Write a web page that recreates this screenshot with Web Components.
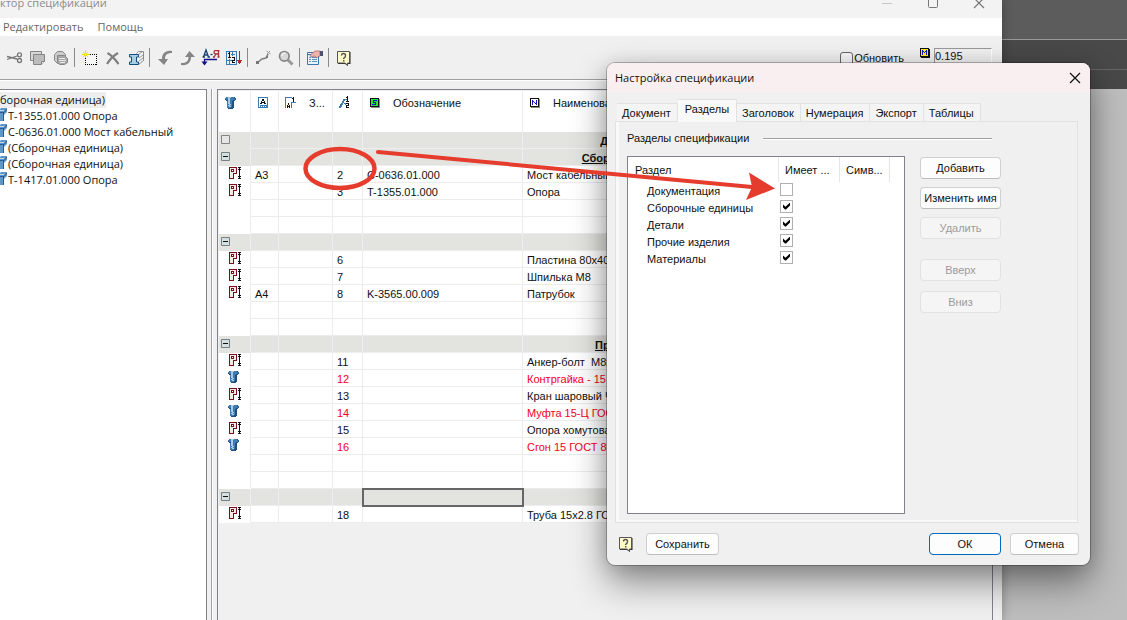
<!DOCTYPE html>
<html lang="ru">
<head>
<meta charset="utf-8">
<title>Редактор спецификации</title>
<style>
  html, body { height: 100%; }
  body {
    margin: 0;
    overflow: hidden;
    font: 11px/16px "Liberation Sans", Arial, sans-serif;
    color: #111;
    --ui-font: "Open Sans", "Noto Sans", sans-serif;
    --face: #f0f0f0;
    --edge: #82828c;
  }
</style>
</head>
<body>
<spec-desktop></spec-desktop>

<script>
const PALETTE = {
  k: '#111', W: '#fff', g: '#8c8c8c', G: '#22e83c', b: '#1414d2', Y: '#fff21c',
  R: '#7b0e18', p: '#f4e9ea', D: '#1d4f81', B: '#3f7ab0', L: '#a9cbe4', F: '#e8f1f8', r: '#b02727'
};

// small bitmap icons: one letter of PALETTE per pixel, dot is transparent
function pixmap(x, y, rows) {
  let out = '';
  rows.forEach((row, j) => {
    for (const m of row.matchAll(/([^.])\1*/g)) {
      out += `<rect x="${x + m.index}" y="${y + j}" width="${m[0].length}" height="1" fill="${PALETTE[m[1]]}"/>`;
    }
  });
  return `<g shape-rendering="crispEdges">${out}</g>`;
}

const ICONS = {
  cut: `<g fill="none" stroke="#777" stroke-width="1.3"><path d="M0 6.500L10 9M0 9.500L10 6"/><circle cx="12.500" cy="4.800" r="2"/><circle cx="12.500" cy="10.500" r="2"/></g>`,
  copy: `<path d="M.500 1.500h11v9H.500z" fill="#d6d6d6" stroke="#858585"/><path d="M3.500 4.500h11v7l-3 3h-8z" fill="#bcbcbc" stroke="#858585"/><path d="M14.500 11.500h-3v3" fill="#eee" stroke="#858585"/>`,
  paste: `<path d="M1.500 4.500l3-3h5l3 3v6l-3 3h-5l-3-3z" fill="#ccc" stroke="#888"/><path d="M4.500 5.500h7l3 3v4l-3 2h-5l-2-2z" fill="#a8a8a8" stroke="#858585"/><path d="M6 8.500h6M6 10.500h7M7 12.500h5" stroke="#e8e8e8"/>`,
  fresh: `<rect x="3.500" y="4.500" width="11" height="10" fill="#f6f6f6" stroke="#000" stroke-dasharray="1 1" shape-rendering="crispEdges"/><path d="M1 2l5 5M6 2L1 7M3.500 0v8M0 4.500h8" stroke="#e9df1c"/><path d="M3 4h1v1H3z" fill="#fff"/>`,
  del: `<path d="M2.500 3C6 5 10 9 13.500 14M13 3C8 6 5 9 2 14" fill="none" stroke="#808080" stroke-width="2.200"/>`,
  part: `<path d="M8.500 3.500l2-2h5v9l-5 4" fill="#f2f2f2" stroke="#8a8a8a"/><path d="M10.500 4.500l4-3M11 8l4-3M11 11l4-3" fill="none" stroke="#9a9a9a"/><path d="M1.500 4.500h9v2.500H8.500v5h2v2.500h-9V12h2V7h-2z" fill="#a7cdea" stroke="#174a7c"/>`,
  undo: `<path d="M15 1C8 0 5 4 5 9H1l6 6 4-6H8c0-4 2-6 7-6z" fill="#858585"/>`,
  redo: `<path d="M1 15c7 1 10-3 10-8h4L9.500 1 5 7h3.500c0 4-2 6-7.500 6z" fill="#858585"/>`,
  sortAz: `<g fill="none" stroke-width="1.300"><path d="M.500 7L3 0l2.500 7M1.500 5h3M-.500 7h2.500M4.500 7h2.500" stroke="#163f78"/><path d="M7.500 4.500h2" stroke="#163f78"/><path d="M11 7l2-3M15.500 0v7M16.500 .700h-4c-2 0-2 3.300 0 3.300h3M10 7h2M14.500 7h2" stroke="#a83131"/><path d="M1.500 14V9.500H14" stroke="#10108c"/></g><path d="M-1.500 11.500h6l-3 4z" fill="#10108c"/>`,
  sortNum: pixmap(0, 1, [
    'BBBBBBBBBBB..r..',
    'BFFkFFBFFFB..r..',
    'BFkkFFBFFFB..r..',
    'BFFkFBBBBFB..r..',
    'BFFkFFBFFFB..r..',
    'BFFkFFFFFFB..r..',
    'BFkkkFkkkFB..r..',
    'BFFFFFFFkFB..r..',
    'BFFBFFFFkFB..r..',
    'BBBBBBkkkFBrrrrr',
    'BFFBFFkFFFB.rrr.',
    'BFFBFFkkkFB.rrr.',
    'BFFBFFFFFFB..r..',
    'BBBBBBBBBBB.....']),
  link: `<path d="M2 13l5-4 4-1 2-4" fill="none" stroke="#808080" stroke-width="1.600"/><path d="M1 11h3v3H1zM11 6h2v2h-2z" fill="#777"/><path d="M11.500 1l4 3M15 1l-3 3" stroke="#999"/>`,
  lens: `<path d="M9.500 9.500l5 5" stroke="#999" stroke-width="3"/><circle cx="6.300" cy="6.300" r="4.800" fill="#d8d8d8" stroke="#858585" stroke-width="1.700"/><path d="M4 6c0-2 1-3 3-3" fill="none" stroke="#fff"/>`,
  props: `<path d="M.500 2.500h11v12H.500z" fill="#e8f3fc" stroke="#3f75a9"/><path d="M1 4.500h10" stroke="#3f75a9"/><path d="M2 7.500h2M5 7.500h5M2 9.500h2M5 9.500h5M2 11.500h2M5 11.500h5" stroke="#5f91bd"/><path d="M3 5l5-4 5 0v5l-4 2-1-2-4 1z" fill="#eeb2ac" stroke="#a85c5c" stroke-width=".7"/><path d="M13 1h3v5h-3z" fill="#4f4f70"/>`,
  help: `<path d="M13 2h1.500v12H12v2l-3-2H2v-1h11z" fill="#222"/><path d="M1.500 1.500h12v11.500H11.500v2L9 13H1.500z" fill="#fffcc7" stroke="#555"/><path d="M5.500 5.500c0-2.700 4-2.700 4 0S7.500 7.500 7.500 9" fill="none" stroke="#555" stroke-width="1.400"/><path d="M7 10h1.500v1.500H7z" fill="#555"/>`,
  bolt: pixmap(2, 2, [
    '.BBLLLBBBD.',
    'BBBLLBBBBBD',
    'DBBLLBBBBBD',
    '.DDLLBBBDD.',
    '..BLLBBDD..',
    '..BLLBBDD..',
    '..BLLBBDD..',
    '..BBLLBDD..',
    '..BLLBBDD..',
    '..BBLLBDD..',
    '..BBBBDDD..',
    '...DDDDD...']),
  detail: pixmap(3, 2, [
    'RRRRRRRR.kkk',
    'RppppppR..k.',
    'RpRRRppR.kkk',
    'RpRWRppR..k.',
    'RpRRRppR..k.',
    'RppppppR..k.',
    'RpppRRRR..k.',
    'RpppR.....k.',
    'RpppR.....k.',
    'RpppR....kkk',
    'RpppR.....k.',
    'RRRRR....kkk']),
  format: pixmap(3, 2, [
    'BBBBBBBBBB',
    'BWWWWWWWWB',
    'BWWWkkWWWB',
    'BWWWkkWWWB',
    'BWWkWWkWWB',
    'BWWkkkkWWB',
    'BWkkWWkkWB',
    'BWWWWWWWWB',
    'BWBBBBBBBB',
    'BWBWBWBWBB',
    'BBBBBBBBBB']),
  zone: pixmap(2, 2, [
    'BBBBBBB.k..',
    'BWWWWW.kk..',
    'BWWWWWW.k..',
    'BWWWWWW.k..',
    'BWWWWWWWk..',
    'BWWWWWBBBBB',
    'BWWkWWBWWW.',
    'BWWkWWBWWW.',
    'BWkWkWBWWW.',
    'BWkkkWBWWW.',
    'BWkWkWBWWW.']),
  position: pixmap(2, 1, [
    '........k..',
    '.......kk..',
    '........k..',
    '....BBBBk..',
    '....BB..k..',
    '...BB..kkk.',
    '...BB......',
    '..BB.BBkkk.',
    '.BBB..B..k.',
    '.BB....kkk.',
    'BBB....k...',
    'BB.....kkk.']),
  code: pixmap(3, 3, [
    'kkkkkkkkk.',
    'kGGGGGGGkg',
    'kGGbbbbGkg',
    'kGGbGGGGkg',
    'kGGbbbGGkg',
    'kGGGGbGGkg',
    'kGbbbbGGkg',
    'kGGGGGGGkg',
    'kkkkkkkkkg',
    '.ggggggggg']),
  name: pixmap(3, 3, [
    'kkkkkkkkk.',
    'kWWWWWWWkg',
    'kWbWWWbWkg',
    'kWbbWWbWkg',
    'kWbWbWbWkg',
    'kWbWWbbWkg',
    'kWbWWWbWkg',
    'kWWWWWWWkg',
    'kkkkkkkkkg',
    '.ggggggggg']),
  mass: pixmap(3, 3, [
    'kkkkkkkkk.',
    'kYYYYYYYkk',
    'kYbYYYbYkk',
    'kYbbYbbYkk',
    'kYbYbYbYkk',
    'kYbYYYbYkk',
    'kYbYYYbYkk',
    'kYYYYYYYkk',
    'kkkkkkkkkk',
    '.kkkkkkkkk']),
  minus: `<path d="M2.500 4.500h8v8h-8z" fill="#d2e0e2" stroke="#777f80"/><path d="M4 8.500h5" stroke="#111"/>`,
  empty: `<path d="M2.500 4.500h8v8h-8z" fill="#e6e6e3" stroke="#858585"/>`,
  min: `<path d="M3 8.500h10" stroke="currentColor" opacity=".35"/>`,
  max: `<rect x="3.500" y="3.500" width="9" height="9" rx="1" fill="none" stroke="currentColor"/>`,
  close: `<path d="M3 3l10 10M13 3L3 13" stroke="currentColor" stroke-width="1.200"/>`
};

class UiIcon extends HTMLElement {
  constructor() {
    super();
    this.attachShadow({ mode: 'open' });
  }

  connectedCallback() {
    const name = this.getAttribute('name');
    this.shadowRoot.innerHTML = `
      <style>
        :host { display: inline-block; flex: none; width: 16px; height: 16px; vertical-align: top; }
        svg { display: block; overflow: visible; }
      </style>
      <svg width="16" height="16" viewBox="0 0 16 16" aria-hidden="true">${ICONS[name] || ''}</svg>
    `;
  }
}
customElements.define('ui-icon', UiIcon);

class PushButton extends HTMLElement {
  constructor() {
    super();
    this.attachShadow({ mode: 'open' });
  }

  connectedCallback() {
    const disabled = this.hasAttribute('disabled') ? 'disabled' : '';
    this.shadowRoot.innerHTML = `
      <style>
        :host { display: block; }
        button {
          display: block;
          box-sizing: border-box;
          width: 100%;
          height: 22px;
          padding: 0 2px;
          border: 1px solid #d0d0d0;
          border-bottom-color: #bcbcbc;
          border-radius: 4px;
          background: #fdfdfd;
          font: inherit;
          color: inherit;
          white-space: nowrap;
        }
        button:disabled { color: #9c9c9c; background: #f5f5f5; border-color: #e2e2e2; }
        :host([primary]) button { border-color: #0067c0; }
      </style>
      <button type="button" ${disabled}><slot></slot></button>
    `;
  }
}
customElements.define('push-button', PushButton);

class ToolBar extends HTMLElement {
  constructor() {
    super();
    this.attachShadow({ mode: 'open' });
  }

  connectedCallback() {
    const items = [
      ['cut', 'Вырезать'], ['copy', 'Копировать'], ['paste', 'Вставить'], null,
      ['fresh', 'Добавить'], ['del', 'Удалить'], ['part', 'Деталь'], null,
      ['undo', 'Отменить'], ['redo', 'Повторить'], ['sortAz', 'Сортировать'], ['sortNum', 'Нумеровать'], null,
      ['link', 'Связь'], ['lens', 'Найти'], null,
      ['props', 'Свойства'], null,
      ['help', 'Справка']
    ];
    this.shadowRoot.innerHTML = `
      <style>
        :host {
          display: flex;
          height: 43px;
          padding-left: 3px;
          border-bottom: 1px solid #a0a0a0;
          box-shadow: 0 1px #fff;
        }
        .tools { display: flex; align-items: center; }
        .tools button { width: 23px; height: 22px; padding: 0 3px; border: 0; background: none; }
        i { width: 1px; height: 19px; margin: 0 3px 0 2px; background: #8a8a8a; }
        .extra { display: flex; align-items: flex-start; margin-left: auto; padding: 12px 10px 0 0; }
        label { display: flex; align-items: center; gap: 1px; margin-top: 2px; }
        input[type=checkbox] {
          appearance: none;
          box-sizing: border-box;
          width: 13px;
          height: 13px;
          margin: 0;
          border: 1px solid #666;
          border-radius: 3px;
          background: #f7f7f7;
        }
        .extra ui-icon { margin: -3px 1px 0 13px; }
        input[type=text] {
          box-sizing: border-box;
          width: 58px;
          height: 20px;
          padding: 0 0 4px;
          border: 1px solid #fff;
          border-top-color: #999;
          border-left-color: #999;
          background: transparent;
          font: inherit;
          color: inherit;
        }
      </style>
      <div class="tools">
        ${items.map(it => it
          ? `<button type="button" aria-label="${it[1]}"><ui-icon name="${it[0]}"></ui-icon></button>`
          : '<i></i>').join('')}
      </div>
      <div class="extra">
        <label><input type="checkbox">Обновить</label>
        <ui-icon name="mass"></ui-icon>
        <input type="text" value="0.195" aria-label="Масса">
      </div>
    `;
  }
}
customElements.define('tool-bar', ToolBar);

class SpecTree extends HTMLElement {
  constructor() {
    super();
    this.attachShadow({ mode: 'open' });
  }

  connectedCallback() {
    const nodes = [
      'T-1355.01.000 Опора',
      'С-0636.01.000 Мост кабельный',
      '(Сборочная единица)',
      '(Сборочная единица)',
      'T-1417.01.000 Опора'
    ];
    this.shadowRoot.innerHTML = `
      <style>
        :host {
          display: block;
          box-sizing: border-box;
          padding-top: 2px;
          border: 1px solid var(--edge);
          border-width: 1px 1px 0 0;
          background: #fff;
          overflow: hidden;
          font: 11px/16px var(--ui-font);
          white-space: nowrap;
        }
        ul { list-style: none; margin: 0; padding: 0; }
        li { display: flex; gap: 1px; height: 16px; }
        .root span { background: #eee; padding-right: 1px; }
        svg { display: block; flex: none; }
      </style>
      <ul>
        <li class="root"><span>борочная единица)</span></li>
        ${nodes.map(n => `
          <li>
            <svg width="7" height="16" viewBox="0 0 7 16" aria-hidden="true">
              <path d="M0 1l1-1h6v4L4 7v6H0z" fill="#5f97c8"/>
              <path d="M0 4.500h4M3.500 5v8M4 4.500L7 1" fill="none" stroke="#28598b"/>
              <path d="M0 2.500h4" stroke="#b7d5ee"/>
            </svg>
            <span>${n}</span>
          </li>`).join('')}
      </ul>
    `;
  }
}
customElements.define('spec-tree', SpecTree);

class SpecTable extends HTMLElement {
  constructor() {
    super();
    this.attachShadow({ mode: 'open' });
  }

  row(r) {
    if (r.group !== undefined) {
      return `<tr class="group">
        <td><ui-icon name="${r.icon || 'minus'}"></ui-icon></td><td></td><td></td><td></td>
        <td class="${r.active ? 'active' : ''}"></td><td>${r.group}</td><td></td>
      </tr>`;
    }
    const [icon, format, pos, code, name] = r;
    return `<tr class="${icon === 'bolt' ? 'std' : ''}">
      <td>${icon ? `<ui-icon name="${icon}"></ui-icon>` : ''}</td>
      <td>${format || ''}</td><td></td><td>${pos || ''}</td>
      <td>${code || ''}</td><td>${name || ''}</td><td></td>
    </tr>`;
  }

  connectedCallback() {
    const blank = [''];
    const rows = [
      { group: 'Документация', icon: 'empty' },
      { group: 'Сборочные единицы' },
      ['detail', 'А3', '2', 'С-0636.01.000', 'Мост кабельный'],
      ['detail', '', '3', 'T-1355.01.000', 'Опора'],
      blank, blank,
      { group: '' },
      ['detail', '', '6', '', 'Пластина 80х40'],
      ['detail', '', '7', '', 'Шпилька М8'],
      ['detail', 'А4', '8', 'K-3565.00.009', 'Патрубок'],
      blank, blank,
      { group: 'Прочие изделия' },
      ['detail', '', '11', '', 'Анкер-болт&nbsp; М8х'],
      ['bolt', '', '12', '', 'Контргайка - 15'],
      ['detail', '', '13', '', 'Кран шаровый Ч'],
      ['bolt', '', '14', '', 'Муфта 15-Ц ГОСТ'],
      ['detail', '', '15', '', 'Опора хомутовая'],
      ['bolt', '', '16', '', 'Сгон 15 ГОСТ 89'],
      blank, blank,
      { group: '', active: true },
      ['detail', '', '18', '', 'Труба 15х2.8 ГОСТ']
    ];
    this.shadowRoot.innerHTML = `
      <style>
        :host {
          display: block;
          box-sizing: border-box;
          padding: 1px 0 0 1px;
          border: 1px solid var(--edge);
          border-bottom: 0;
          overflow: hidden;
        }
        table { width: 100%; table-layout: fixed; border-collapse: separate; border-spacing: 0; background: #fff; }
        th, td { box-sizing: border-box; padding: 0 0 0 4px; border-right: 1px solid #ececec; text-align: left; font-weight: normal; white-space: nowrap; }
        th { height: 41px; padding-top: 4px; vertical-align: top; }
        th div { display: flex; gap: 10px; }
        th span { overflow: hidden; }
        td { height: 17px; padding-top: 2px; line-height: 14px; border-bottom: 1px solid #ececec; }
        td:first-child { padding: 0 0 0 7px; border-bottom-color: transparent; }
        td ui-icon { height: 14px; margin-top: -2px; }
        .group td { background: #e3e4df; border-color: #eee; }
        .group td:first-child { padding-left: 0; border-bottom-color: #e3e4df; }
        .group td:nth-child(6) { padding: 2px 0 0; text-align: center; font-weight: bold; text-decoration: underline; }
        .group td.active { outline: 2px solid #666; outline-offset: -1px; }
        .std td { color: #f4001c; }
      </style>
      <table>
        <colgroup>
          <col style="width:32px"><col style="width:28px"><col style="width:54px"><col style="width:30px">
          <col style="width:160px"><col style="width:234px"><col>
        </colgroup>
        <thead>
          <tr>
            <th aria-label="Тип"><div><ui-icon name="bolt"></ui-icon></div></th>
            <th aria-label="Формат"><div><ui-icon name="format"></ui-icon></div></th>
            <th><div><ui-icon name="zone"></ui-icon><span>З...</span></div></th>
            <th aria-label="Позиция"><div><ui-icon name="position"></ui-icon></div></th>
            <th><div><ui-icon name="code"></ui-icon><span>Обозначение</span></div></th>
            <th><div><ui-icon name="name"></ui-icon><span>Наименование</span></div></th>
            <th></th>
          </tr>
        </thead>
        <tbody>${rows.map(r => this.row(r)).join('')}</tbody>
      </table>
    `;
  }
}
customElements.define('spec-table', SpecTable);

class EditorWindow extends HTMLElement {
  constructor() {
    super();
    this.attachShadow({ mode: 'open' });
  }

  connectedCallback() {
    this.shadowRoot.innerHTML = `
      <style>
        :host {
          display: flex;
          flex-direction: column;
          background: var(--face);
          box-shadow: 0 0 10px rgba(0, 0, 0, .3);
        }
        /* the caption runs off the top of the screen */
        header {
          display: flex;
          align-items: center;
          height: 30px;
          margin-top: -12px;
          background: #f3f3f3;
          font: 11px/16px var(--ui-font);
          color: #8c8c8c;
        }
        header div { margin-left: auto; display: flex; }
        header button { width: 46px; height: 28px; padding: 0; border: 0; background: none; color: #777; }
        nav { display: flex; gap: 14px; height: 18px; padding-left: 3px; background: #fff; }
        nav button { padding: 0; border: 0; background: none; font: 11px/18px var(--ui-font); color: #666; }
        main { flex: 1; display: flex; min-height: 0; padding: 9px 9px 0 0; }
        spec-tree { width: 207px; flex: none; }
        .split { width: 5px; margin: 0 1px 0 4px; border-left: 1px solid #a0a0a0; box-sizing: border-box; box-shadow: inset 1px 0 #fff; }
        spec-table { flex: 1; min-width: 0; }
      </style>
      <header>
        <span>ктор спецификации</span>
        <div>
          <button type="button" aria-label="Свернуть"><ui-icon name="min"></ui-icon></button>
          <button type="button" aria-label="Развернуть"><ui-icon name="max"></ui-icon></button>
          <button type="button" aria-label="Закрыть"><ui-icon name="close"></ui-icon></button>
        </div>
      </header>
      <nav>
        <button type="button">Редактировать</button>
        <button type="button">Помощь</button>
      </nav>
      <tool-bar></tool-bar>
      <main>
        <spec-tree></spec-tree>
        <div class="split"></div>
        <spec-table></spec-table>
      </main>
    `;
  }
}
customElements.define('editor-window', EditorWindow);

class TabStrip extends HTMLElement {
  constructor() {
    super();
    this.attachShadow({ mode: 'open' });
  }

  connectedCallback() {
    const tabs = this.getAttribute('tabs').split(',');
    const current = Number(this.getAttribute('current'));
    this.shadowRoot.innerHTML = `
      <style>
        :host { display: flex; align-items: flex-end; height: 22px; }
        button {
          box-sizing: border-box;
          height: 18px;
          padding: 0 6px 0 5px;
          border: 1px solid #e2e2e2;
          border-width: 1px 1px 0 0;
          background: #f4f4f4;
          font: inherit;
          color: inherit;
        }
        button:first-child { border-left-width: 1px; }
        button[aria-selected=true] { height: 23px; margin-bottom: -1px; padding: 0 7px 4px; background: #f9f9f9; position: relative; }
      </style>
      ${tabs.map((t, i) => `<button type="button" role="tab" aria-selected="${i === current}">${t}</button>`).join('')}
    `;
    this.setAttribute('role', 'tablist');
  }
}
customElements.define('tab-strip', TabStrip);

class SectionList extends HTMLElement {
  constructor() {
    super();
    this.attachShadow({ mode: 'open' });
  }

  connectedCallback() {
    const sections = [
      ['Документация', false],
      ['Сборочные единицы', true],
      ['Детали', true],
      ['Прочие изделия', true],
      ['Материалы', true]
    ];
    this.shadowRoot.innerHTML = `
      <style>
        :host { display: block; box-sizing: border-box; border: 1px solid var(--edge); background: #fff; }
        table { table-layout: fixed; width: 262px; border-collapse: separate; border-spacing: 0; }
        th, td { box-sizing: border-box; padding: 0; text-align: left; font-weight: normal; white-space: nowrap; }
        th { height: 25px; padding-left: 6px; border-right: 1px solid #e5e5e5; }
        th:first-child { padding-left: 7px; }
        td { height: 17px; padding-left: 1px; }
        td:first-child { padding-left: 19px; }
        label { display: block; padding-top: 2px; line-height: 15px; }
        input {
          appearance: none;
          display: block;
          box-sizing: border-box;
          width: 13px;
          height: 13px;
          margin: 0 0 3px;
          border: 1px solid #b0b0b0;
          background: #fff;
        }
        input:checked::before {
          content: "";
          display: block;
          width: 7px;
          height: 7px;
          margin: 2px;
          background: #000;
          clip-path: polygon(0 29%, 0 71%, 29% 100%, 43% 100%, 100% 43%, 100% 0, 36% 60%);
        }
      </style>
      <table>
        <colgroup><col style="width:151px"><col style="width:61px"><col style="width:50px"></colgroup>
        <thead><tr><th>Раздел</th><th>Имеет ...</th><th>Симв...</th></tr></thead>
        <tbody>
          ${sections.map(([name, on], i) => `
            <tr>
              <td><label for="s${i}">${name}</label></td>
              <td><input type="checkbox" id="s${i}" ${on ? 'checked' : ''}></td>
              <td></td>
            </tr>`).join('')}
        </tbody>
      </table>
    `;
  }
}
customElements.define('section-list', SectionList);

class SettingsDialog extends HTMLElement {
  constructor() {
    super();
    this.attachShadow({ mode: 'open' });
  }

  connectedCallback() {
    this.setAttribute('role', 'dialog');
    this.shadowRoot.innerHTML = `
      <style>
        :host {
          display: block;
          border-radius: 8px;
          background: var(--face);
          box-shadow: 0 0 0 1px rgba(0, 0, 0, .25), 0 18px 36px rgba(0, 0, 0, .42), 0 2px 20px rgba(0, 0, 0, .15);
        }
        header {
          display: flex;
          align-items: center;
          justify-content: space-between;
          height: 29px;
          padding-left: 8px;
          border-radius: 8px 8px 0 0;
          background: #f9eff0;
          font: 11px/16px var(--ui-font);
        }
        header button { width: 30px; height: 28px; padding: 0; border: 0; background: none; color: #111; }
        tab-strip { margin: 7px 10px 0; }
        .page {
          margin: 0 12px 0 8px;
          padding: 8px 11px;
          border: 1px solid #e2e2e2;
          box-shadow: inset 3px -2px #f9f9f9;
        }
        .caption { display: flex; align-items: center; gap: 14px; margin: 0 74px 10px 0; }
        .caption::after { content: ""; flex: 1; height: 1px; background: #a0a0a0; box-shadow: 0 1px #fff; }
        .cols { display: flex; gap: 15px; }
        section-list { flex: 1; min-height: 358px; }
        .side { display: flex; flex-direction: column; gap: 20px; width: 81px; margin: 1px 65px 0 0; }
        .side div { display: grid; gap: 8px; }
        .side .order { gap: 10px; }
        footer { display: flex; align-items: center; padding: 10px 11px; }
        footer push-button { width: 69px; }
        footer push-button[primary] { width: 72px; margin: 0 9px 0 auto; }
        footer .save { width: 73px; }
        footer .help { width: 16px; height: 16px; margin-right: 12px; padding: 0; border: 0; background: none; }
      </style>
      <header>
        <span>Настройка спецификации</span>
        <button type="button" aria-label="Закрыть"><ui-icon name="close"></ui-icon></button>
      </header>
      <tab-strip tabs="Документ,Разделы,Заголовок,Нумерация,Экспорт,Таблицы" current="1"></tab-strip>
      <div class="page">
        <div class="caption">Разделы спецификации</div>
        <div class="cols">
          <section-list></section-list>
          <div class="side">
            <div>
              <push-button>Добавить</push-button>
              <push-button>Изменить имя</push-button>
              <push-button disabled>Удалить</push-button>
            </div>
            <div class="order">
              <push-button disabled>Вверх</push-button>
              <push-button disabled>Вниз</push-button>
            </div>
          </div>
        </div>
      </div>
      <footer>
        <button class="help" type="button" aria-label="Справка"><ui-icon name="help"></ui-icon></button>
        <push-button class="save">Сохранить</push-button>
        <push-button primary>ОК</push-button>
        <push-button>Отмена</push-button>
      </footer>
    `;
  }
}
customElements.define('settings-dialog', SettingsDialog);

class CalloutArrow extends HTMLElement {
  constructor() {
    super();
    this.attachShadow({ mode: 'open' });
  }

  connectedCallback() {
    this.shadowRoot.innerHTML = `
      <style>
        :host { display: block; pointer-events: none; }
        svg { display: block; }
      </style>
      <svg width="480" height="60" viewBox="300 140 480 60" overflow="visible" aria-hidden="true">
        <g fill="none" stroke="#e63c2e" stroke-linecap="round">
          <ellipse cx="340" cy="168.500" rx="34.500" ry="19.500" stroke-width="4.500"/>
          <path d="M378 152L752 187" stroke-width="4"/>
        </g>
        <path d="M775 188.500L749 172.500L752 187L746 200z" fill="#e63c2e"/>
      </svg>
    `;
  }
}
customElements.define('callout-arrow', CalloutArrow);

class SpecDesktop extends HTMLElement {
  constructor() {
    super();
    this.attachShadow({ mode: 'open' });
  }

  connectedCallback() {
    this.shadowRoot.innerHTML = `
      <style>
        :host {
          display: block;
          position: relative;
          height: 100%;
          overflow: hidden;
          background: linear-gradient(
            #5c5c5c 39px, #999 39px, #999 40px, #494949 40px, #494949 69px,
            #666 69px, #666 70px, #484848 70px, #484848 89px, #bebebe 89px);
        }
        editor-window { height: 100%; margin-right: 125px; }
        settings-dialog { position: absolute; left: 607px; top: 63px; width: 483px; }
        callout-arrow { position: absolute; left: 300px; top: 140px; }
      </style>
      <editor-window></editor-window>
      <settings-dialog></settings-dialog>
      <callout-arrow></callout-arrow>
    `;
  }
}
customElements.define('spec-desktop', SpecDesktop);
</script>
</body>
</html>
